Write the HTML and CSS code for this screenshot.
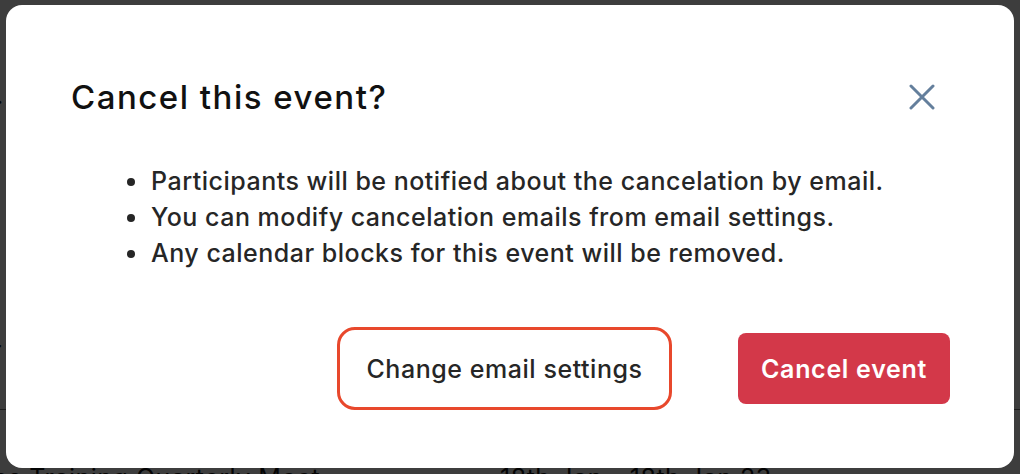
FILE: index.html
```html
<!DOCTYPE html>
<html lang="en">
<head>
<meta charset="utf-8">
<title>Cancel this event?</title>
<link rel="stylesheet" href="styles.css">
</head>
<body>
<div class="page">
  <div class="page-row row-a"><span class="frag">.</span></div>
  <div class="page-row row-b"><span class="frag">r</span></div>
  <div class="page-row row-c">
    <span class="cell-name">es Training Quarterly Meet</span>
    <span class="cell-date">18th Jan - 18th Jan 23</span>
  </div>
</div>
<div class="overlay"></div>
<div class="modal" role="dialog" aria-labelledby="modal-title">
  <div class="modal-header">
    <h2 id="modal-title" class="modal-title">Cancel this event?</h2>
    <button class="close-btn" aria-label="Close">
      <svg width="26" height="26" viewBox="0 0 26 26" fill="none" stroke="currentColor" stroke-width="3" stroke-linecap="round">
        <path d="M2 2 L24 24 M24 2 L2 24"/>
      </svg>
    </button>
  </div>
  <ul class="notes">
    <li>Participants will be notified about the cancelation by email.</li>
    <li>You can modify cancelation emails from email settings.</li>
    <li>Any calendar blocks for this event will be removed.</li>
  </ul>
  <div class="actions">
    <button class="btn btn-outline">Change email settings</button>
    <button class="btn btn-danger">Cancel event</button>
  </div>
</div>
</body>
</html>
```

FILE: styles.css
```css
* { box-sizing: border-box; }

html, body {
  margin: 0;
  padding: 0;
  width: 1020px;
  height: 474px;
  overflow: hidden;
  font-family: Inter, "Noto Sans", "Liberation Sans", sans-serif;
  background: #ffffff;
}

.page {
  position: relative;
  width: 1020px;
  height: 474px;
  color: #111;
  font-size: 25px;
  letter-spacing: 0.5px;
}

.page-row {
  display: flex;
  line-height: 30px;
}

.row-a { padding-top: 80px; height: 120px; margin-left: -4px; }
.row-b { height: 290px; padding-top: 215px; margin-left: -8px; border-bottom: 1px solid #7a7a7a; }
.row-c { padding-top: 53px; margin-left: -7px; }

.cell-name { width: 507px; }

.overlay {
  position: absolute;
  inset: 0;
  background: rgba(0, 0, 0, 0.76);
}

.modal {
  position: absolute;
  left: 6px;
  top: 5px;
  width: 1008px;
  height: 463px;
  background: #ffffff;
  border-radius: 16px;
  padding: 72px 64px 0 65px;
  display: flex;
  flex-direction: column;
}

.modal-header {
  display: flex;
  align-items: center;
  justify-content: space-between;
}

.modal-title {
  margin: 0;
  font-size: 33px;
  line-height: 40px;
  font-weight: 500;
  color: #111111;
  letter-spacing: 1.5px;
}

.close-btn {
  border: 0;
  background: none;
  padding: 0;
  margin-right: 15px;
  width: 26px;
  height: 26px;
  color: #647f9c;
  display: flex;
}

.notes {
  margin: 46px 0 0 0;
  padding: 0 0 0 80px;
  list-style: none;
  font-size: 25px;
  line-height: 36px;
  font-weight: 500;
  color: #262626;
  letter-spacing: 0.5px;
}

.notes li {
  position: relative;
}

.notes li::before {
  content: "";
  position: absolute;
  left: -24px;
  top: 15px;
  width: 8px;
  height: 8px;
  border-radius: 50%;
  background: #262626;
}

.actions {
  margin-top: 56px;
  display: flex;
  justify-content: flex-end;
  align-items: center;
  gap: 66px;
}

.btn {
  font-family: inherit;
  font-size: 25px;
  cursor: pointer;
}

.btn-outline {
  height: 83px;
  width: 335px;
  border: 3px solid #e8482c;
  border-radius: 18px;
  background: #ffffff;
  color: #262626;
  font-weight: 500;
  letter-spacing: 0.55px;
}

.btn-danger {
  height: 71px;
  width: 212px;
  border: 0;
  border-radius: 8px;
  background: #d33849;
  color: #ffffff;
  font-weight: 600;
  letter-spacing: 0.7px;
}
```
